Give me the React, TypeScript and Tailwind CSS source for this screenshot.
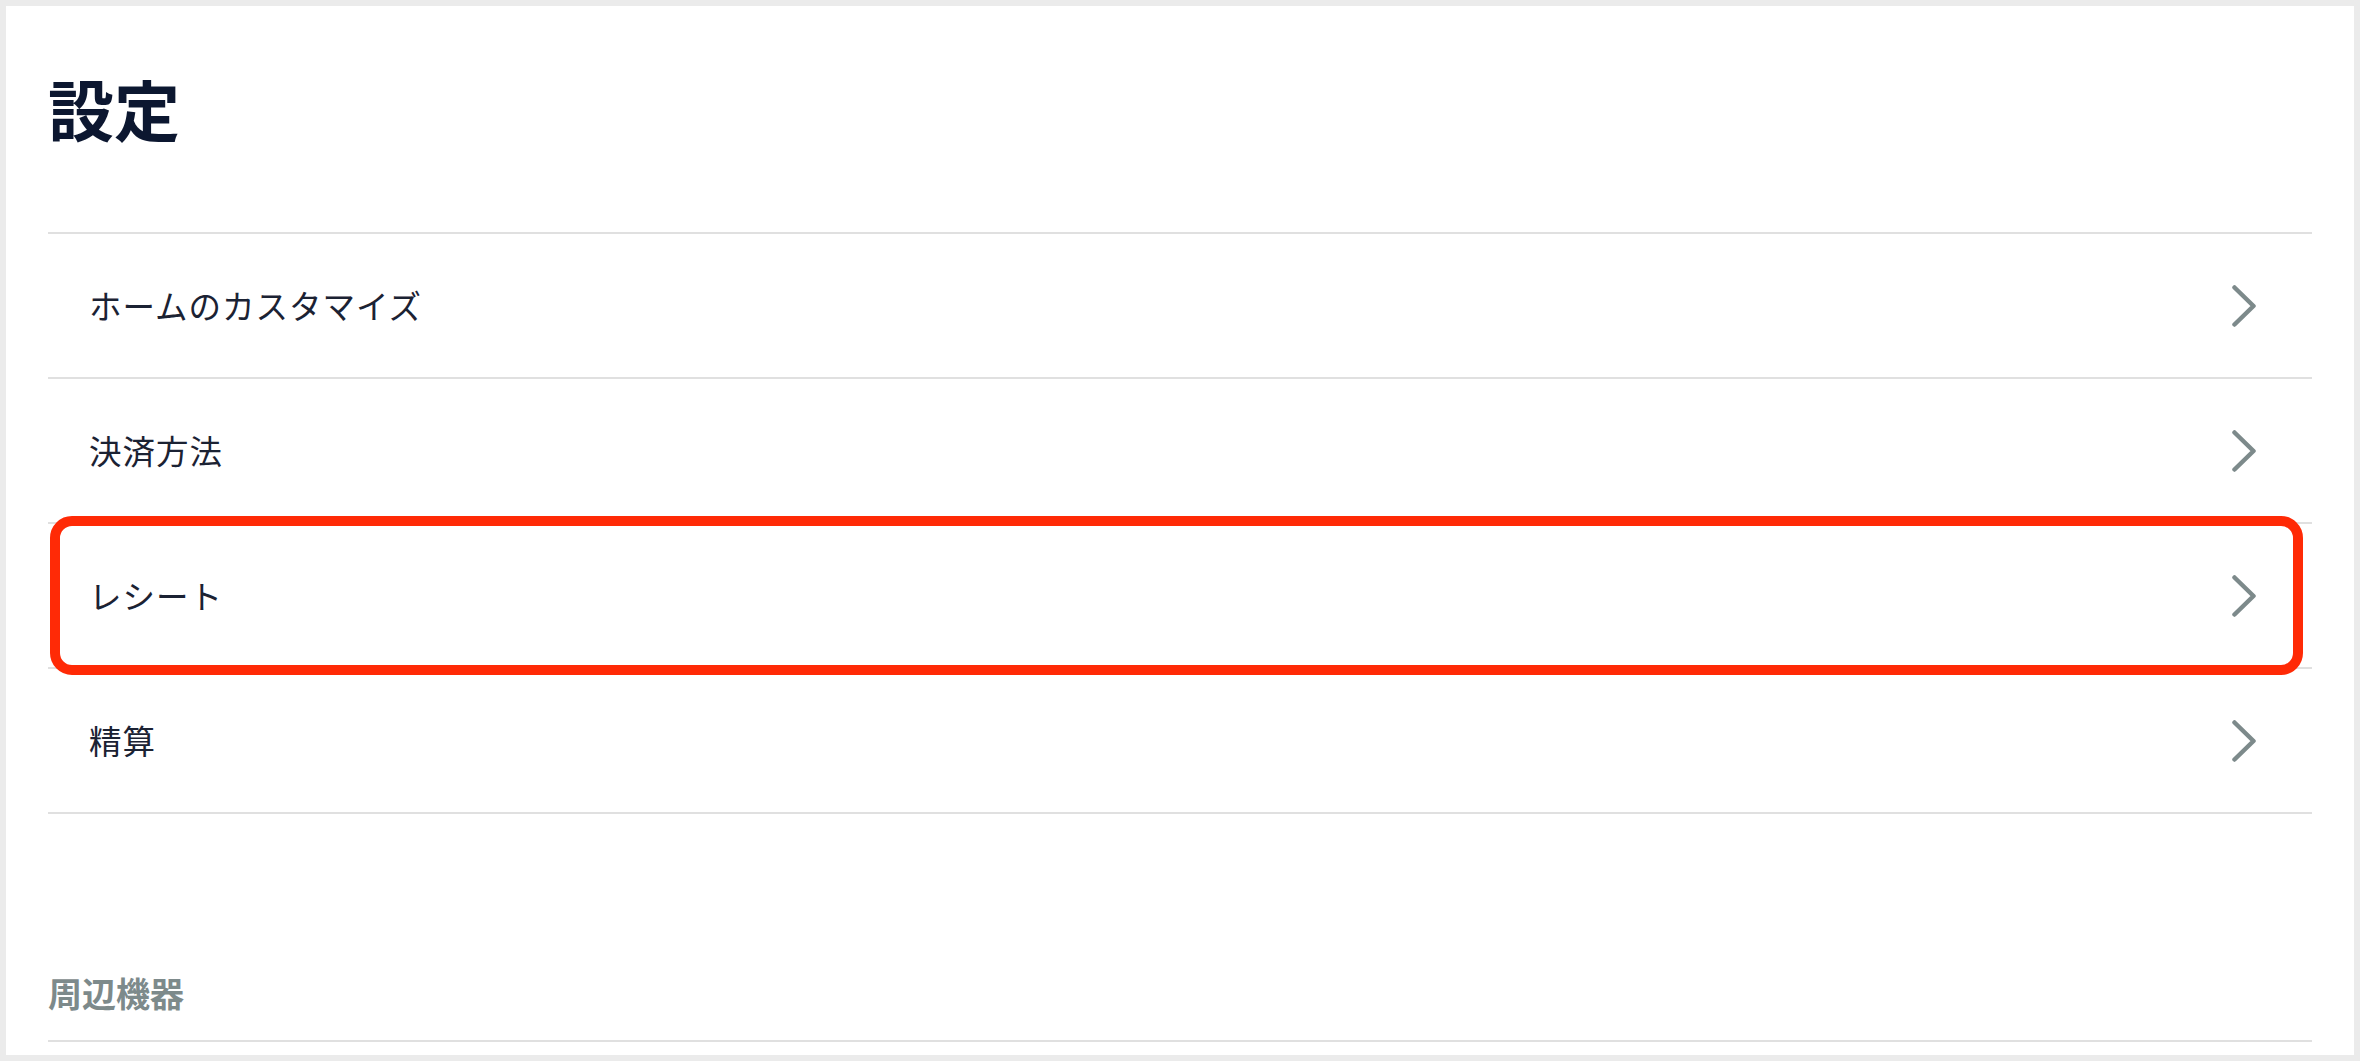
import React from "react";

const menuItems: { label: string; highlighted?: boolean }[] = [
  { label: "ホームのカスタマイズ" },
  { label: "決済方法" },
  { label: "レシート", highlighted: true },
  { label: "精算" },
];

const Chevron = () => (
  <svg width="24" height="42" viewBox="0 0 24 42" fill="none" aria-hidden="true">
    <path
      d="M2.5 2.5 L21.5 21 L2.5 39.5"
      stroke="#7d8a8b"
      strokeWidth="4.5"
      strokeLinecap="round"
      strokeLinejoin="round"
    />
  </svg>
);

const App: React.FC = () => {
  return (
    <div
      className="h-[1061px] w-full overflow-hidden border-[6px] border-[#ebebeb] bg-white px-[42px]"
      style={{ fontFamily: '"Noto Sans CJK JP", "Noto Sans", sans-serif' }}
    >
      <div className="h-[226px] pt-[68px]">
        <h1 className="text-[66px] font-bold leading-[66px] text-[#0c1730]">設定</h1>
      </div>

      <ul className="border-t-2 border-[#e0e0e0]">
        {menuItems.map((item) => (
          <li
            key={item.label}
            className="relative flex h-[145px] items-center justify-between border-b-2 border-[#e0e0e0] pl-[41px] pr-[56px]"
          >
            <span className="text-[32.5px] leading-none tracking-[1px] text-[#1b2233]">{item.label}</span>
            <Chevron />
            {item.highlighted && (
              <div className="pointer-events-none absolute -top-[8px] -bottom-[8px] left-[2px] right-[9px] rounded-[22px] border-[10px] border-[#ff2a06]" />
            )}
          </li>
        ))}
      </ul>

      <div className="border-b-2 border-[#e0e0e0] pt-[162px] pb-[30px]">
        <h2 className="text-[34px] font-bold leading-[34px] text-[#7d8a8b]">周辺機器</h2>
      </div>
    </div>
  );
};

export default App;
